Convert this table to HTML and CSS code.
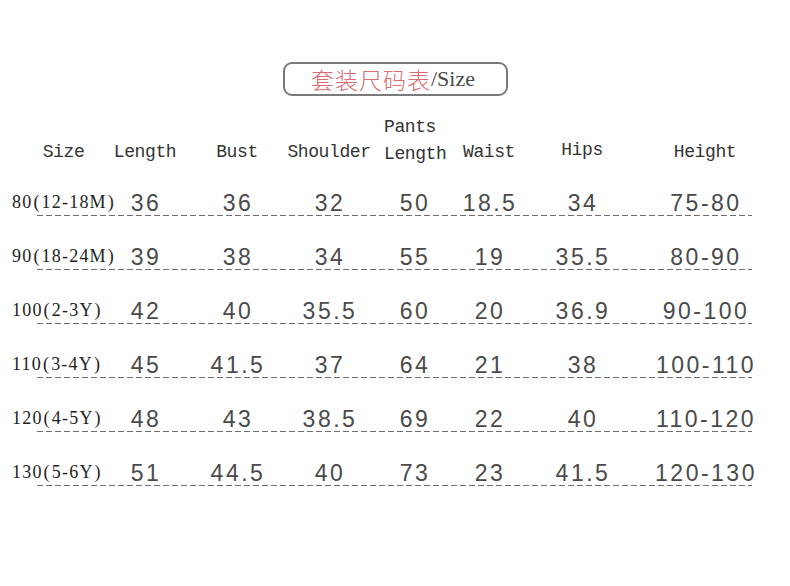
FILE: index.html
```html
<!DOCTYPE html>
<html>
<head>
<meta charset="utf-8">
<link rel="stylesheet" href="styles.css">
</head>
<body>
<div class="page">
  <div class="title"><span class="cn">套装尺码表</span><span class="en">/Size</span></div>
  <div class="head grid">
    <div class="h">Size</div>
    <div class="h">Length</div>
    <div class="h">Bust</div>
    <div class="h">Shoulder</div>
    <div class="h two">Pants<br>Length</div>
    <div class="h">Waist</div>
    <div class="h hips">Hips</div>
    <div class="h">Height</div>
  </div>
  <div class="rows">
    <div class="row">
      <div class="grid cells"><div class="lab">80<span class="p">(</span>12-18M<span class="p">)</span></div><div class="n">36</div><div class="n">36</div><div class="n">32</div><div class="n">50</div><div class="n">18.5</div><div class="n">34</div><div class="n">75-80</div></div>
      <div class="dash"></div>
    </div>
    <div class="row">
      <div class="grid cells"><div class="lab">90<span class="p">(</span>18-24M<span class="p">)</span></div><div class="n">39</div><div class="n">38</div><div class="n">34</div><div class="n">55</div><div class="n">19</div><div class="n">35.5</div><div class="n">80-90</div></div>
      <div class="dash"></div>
    </div>
    <div class="row">
      <div class="grid cells"><div class="lab">100<span class="p">(</span>2-3Y<span class="p">)</span></div><div class="n">42</div><div class="n">40</div><div class="n">35.5</div><div class="n">60</div><div class="n">20</div><div class="n">36.9</div><div class="n">90-100</div></div>
      <div class="dash"></div>
    </div>
    <div class="row">
      <div class="grid cells"><div class="lab">110<span class="p">(</span>3-4Y<span class="p">)</span></div><div class="n">45</div><div class="n">41.5</div><div class="n">37</div><div class="n">64</div><div class="n">21</div><div class="n">38</div><div class="n">100-110</div></div>
      <div class="dash"></div>
    </div>
    <div class="row">
      <div class="grid cells"><div class="lab">120<span class="p">(</span>4-5Y<span class="p">)</span></div><div class="n">48</div><div class="n">43</div><div class="n">38.5</div><div class="n">69</div><div class="n">22</div><div class="n">40</div><div class="n">110-120</div></div>
      <div class="dash"></div>
    </div>
    <div class="row">
      <div class="grid cells"><div class="lab">130<span class="p">(</span>5-6Y<span class="p">)</span></div><div class="n">51</div><div class="n">44.5</div><div class="n">40</div><div class="n">73</div><div class="n">23</div><div class="n">41.5</div><div class="n">120-130</div></div>
      <div class="dash"></div>
    </div>
  </div>
</div>
</body>
</html>
```

FILE: styles.css
```css
html, body {
  margin: 0;
  padding: 0;
  background: #ffffff;
}
.page {
  width: 790px;
  height: 586px;
  padding-top: 62px;
  box-sizing: border-box;
}
.title {
  width: 225px;
  height: 34px;
  box-sizing: border-box;
  margin: 0 auto;
  border: 2px solid #7a7a7a;
  border-radius: 9px;
  display: flex;
  align-items: center;
  justify-content: center;
  padding-right: 4px;
}
.title .cn {
  font-family: "Noto Sans CJK SC", sans-serif;
  font-size: 23px;
  letter-spacing: 1px;
  color: #dc6b73;
  font-weight: 300;
}
.title .en {
  font-family: "Liberation Serif", serif;
  font-size: 22px;
  color: #4a4a4a;
}
.grid {
  display: grid;
  grid-template-columns: 103px 60px 124px 60px 110px 40px 146px 100px;
  padding-left: 12px;
}
.head {
  margin-top: 18px;
  align-items: end;
}
.h {
  display: flex;
  justify-content: center;
  text-align: left;
  font-family: "Liberation Mono", monospace;
  font-size: 18px;
  letter-spacing: -0.4px;
  line-height: 27px;
  color: #333333;
  white-space: nowrap;
  padding-bottom: 2px;
}
.h.two {
  padding-bottom: 0;
  justify-content: flex-start;
  padding-left: 25px;
}
.h.hips {
  padding-bottom: 4px;
}
.rows {
  margin-top: 22px;
}
.row + .row {
  margin-top: 28px;
}
.cells {
  height: 25px;
  align-items: center;
}
.lab {
  font-family: "Liberation Serif", serif;
  font-size: 18px;
  letter-spacing: 1.2px;
  color: #222222;
  white-space: nowrap;
  padding-bottom: 2px;
}
.lab .p {
  margin: 0 1px;
}
.n {
  display: flex;
  justify-content: center;
  font-family: "Liberation Sans", sans-serif;
  font-size: 23px;
  letter-spacing: 2.5px;
  padding-left: 2px;
  color: #4a4a4a;
  white-space: nowrap;
}
.dash {
  height: 1px;
  width: 715px;
  margin-left: 37px;
  background: repeating-linear-gradient(to right, #6e6e6e 0 6px, transparent 6px 9px);
}
```
